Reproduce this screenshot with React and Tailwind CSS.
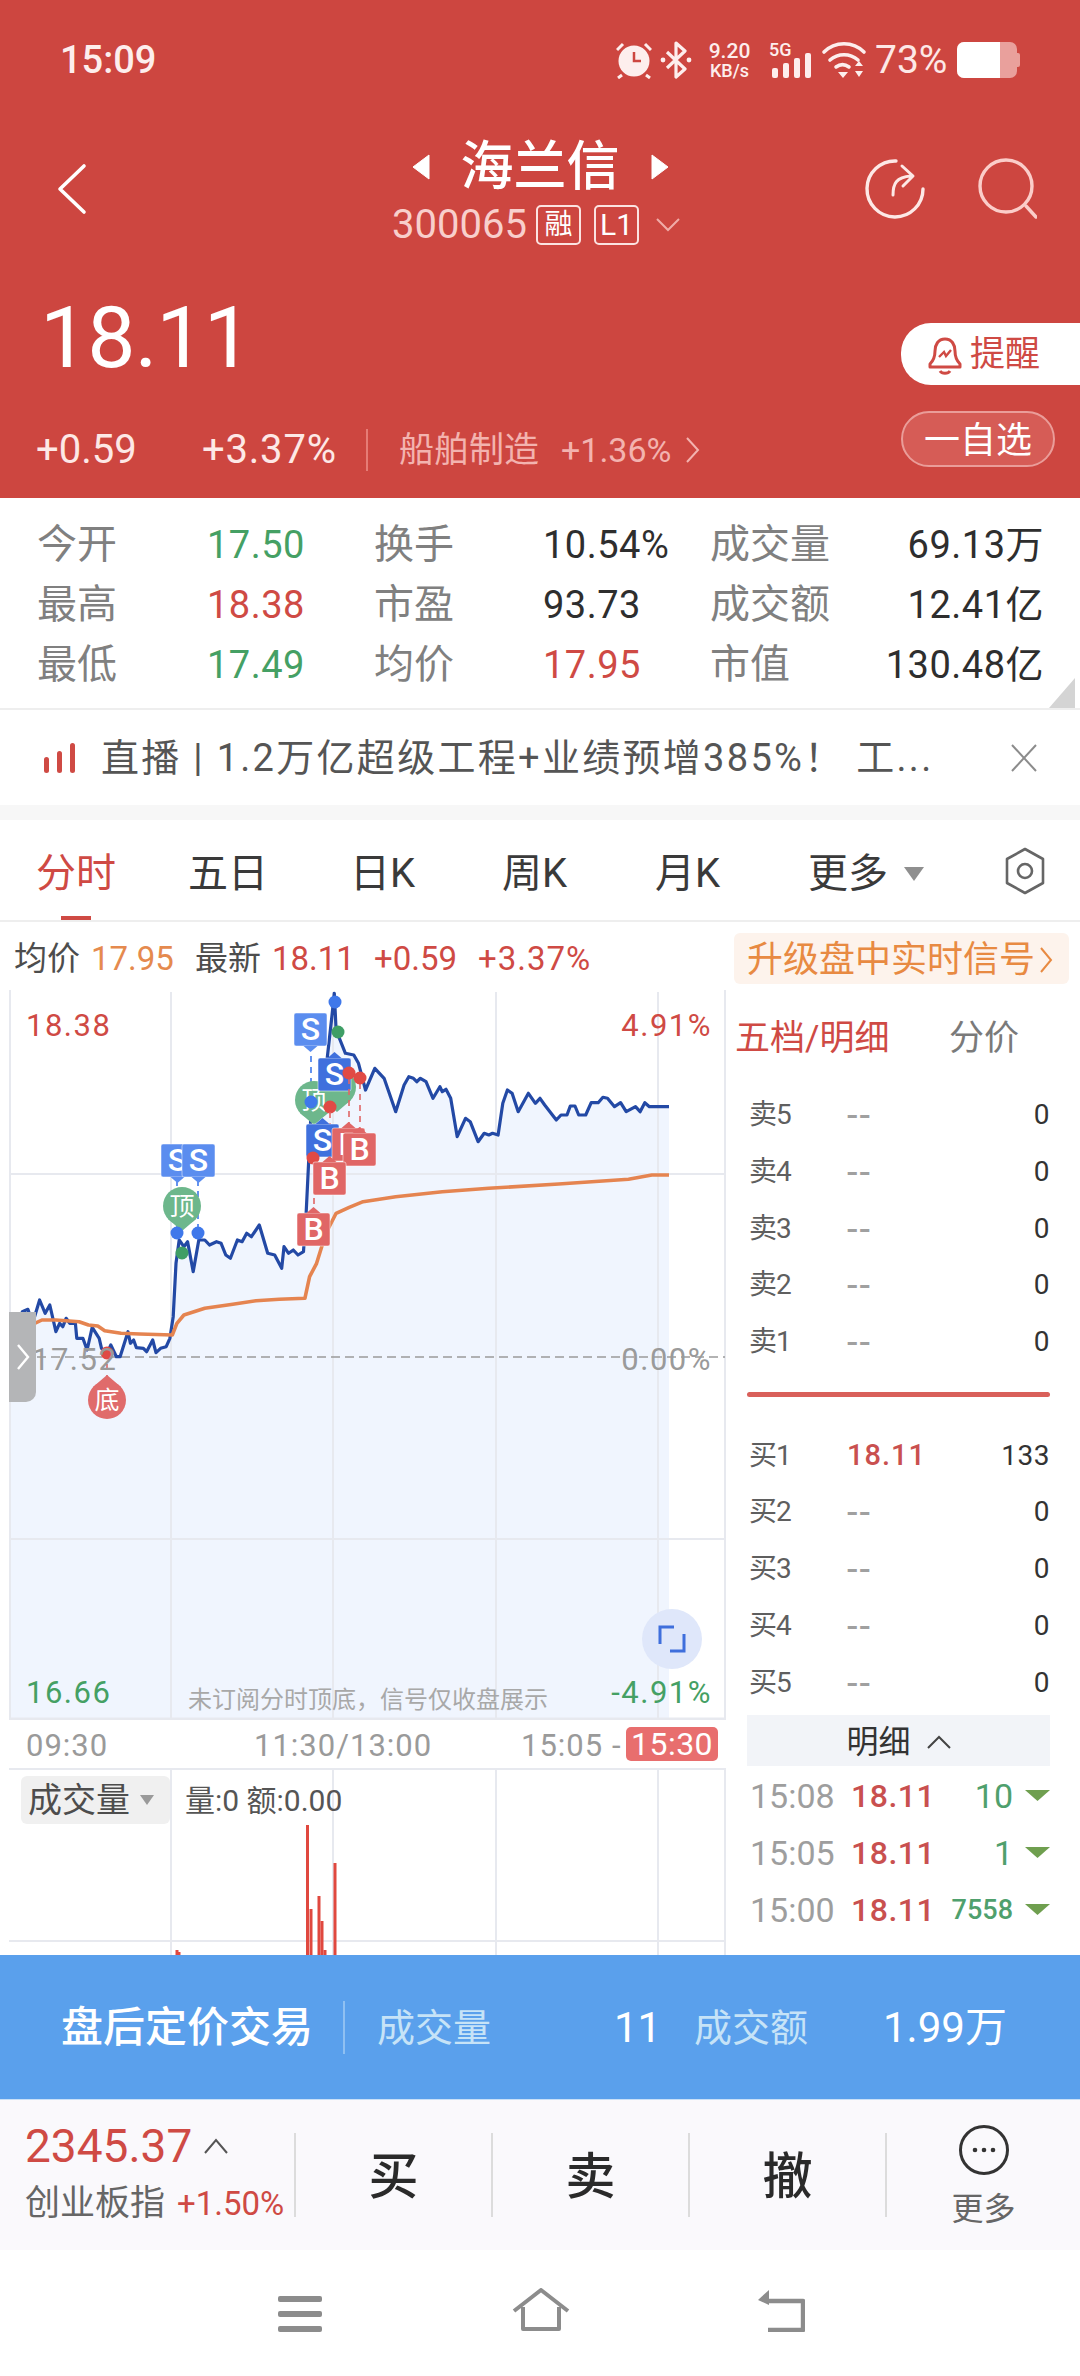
import React from "react";

const z3 = (p) => p.map(([x, y]) => [+(x / 2.148).toFixed(1), +(y / 3 + 970).toFixed(1)]);
const blue = z3([[20,1170],[28,1100],[35,1060],[42,1065],[48,1025],[60,1018],[70,1060],[85,990],[97,1030],[107,1005],[120,1085],[128,1060],[135,1070],[142,1045],[150,1060],[162,1060],[165,1105],[178,1105],[187,1140],[198,1072],[213,1105],[218,1135],[230,1150],[238,1125],[250,1160],[258,1160],[275,1085],[280,1120],[287,1110],[293,1133],[308,1135],[315,1145],[328,1110],[335,1148],[345,1135],[357,1130],[365,1105],[372,1040],[378,880],[385,810],[395,830],[403,815],[415,905],[427,810],[440,810],[450,825],[465,815],[475,820],[485,855],[495,865],[510,810],[520,815],[530,790],[540,800],[557,765],[575,850],[590,855],[605,895],[610,830],[620,850],[630,840],[640,855],[652,845],[658,720],[668,430],[680,400],[700,300],[712,150],[718,70],[722,180],[742,250],[760,255],[770,280],[785,360],[805,295],[825,325],[850,425],[868,345],[878,320],[888,325],[895,335],[903,325],[915,335],[930,385],[945,350],[950,365],[958,358],[968,385],[982,500],[1000,445],[1010,455],[1027,515],[1040,490],[1050,495],[1058,490],[1070,495],[1080,400],[1090,360],[1100,370],[1113,425],[1135,370],[1150,400],[1160,385],[1170,405],[1195,450],[1205,435],[1218,435],[1225,408],[1235,408],[1243,435],[1258,435],[1270,398],[1285,398],[1295,382],[1305,385],[1320,410],[1333,398],[1345,425],[1365,410],[1375,425],[1385,398],[1395,410],[1437,410]]);
const orange = z3([[20,1185],[30,1110],[60,1070],[90,1050],[120,1050],[170,1055],[190,1065],[210,1068],[225,1082],[260,1090],[300,1092],[370,1095],[380,1060],[395,1035],[440,1015],[500,1003],[550,992],[600,988],[655,985],[665,920],[680,880],[700,790],[722,730],[750,712],[780,695],[850,680],[950,665],[1050,655],[1200,642],[1350,628],[1400,615],[1437,615]]);
const pts = (a) => a.map((p) => p.join(",")).join(" ");

function Badge({ x, y, t, fill, up }) {
  const w = 33, h = 33, c = x + w / 2;
  const tip = up ? `${c - 7},${y} ${c},${y - 6} ${c + 7},${y}` : `${c - 7},${y + h} ${c},${y + h + 6} ${c + 7},${y + h}`;
  return (
    <g>
      <rect x={x} y={y} width={w} height={h} rx="2" fill={fill} stroke="#ffffff" strokeOpacity="0.5" />
      <polygon points={tip} fill={fill} />
      <text x={c} y={y + 27} textAnchor="middle" fontSize="32" fontWeight="500" fill="#fff">{t}</text>
    </g>
  );
}
function Drop({ cx, cy, t, fill, up }) {
  const tip = up ? `${cx - 14},${cy - 13} ${cx},${cy - 25} ${cx + 14},${cy - 13}` : `${cx - 14},${cy + 13} ${cx},${cy + 25} ${cx + 14},${cy + 13}`;
  return (
    <g>
      <circle cx={cx} cy={cy} r="19" fill={fill} />
      <polygon points={tip} fill={fill} />
      <text x={cx} y={cy + 9} textAnchor="middle" fontSize="25" fill="#fff">{t}</text>
    </g>
  );
}
const Dot = ({ x, y, c }) => <circle cx={x} cy={y} r="6.5" fill={c} />;
const Dash = ({ x, a, b, c }) => <line x1={x} x2={x} y1={a} y2={b} stroke={c} strokeWidth="1.6" strokeDasharray="6 5" />;

function Chart() {
  const S = "#5b8def", SD = "#3f70dd", B = "#e06666", G = "#6db78c", BD = "#3f78ea", RD = "#e04a45", GD = "#3f9e66";
  return (
    <svg className="absolute inset-0 font-['Roboto','Noto_Sans_CJK_SC',sans-serif]" width="717" height="730" viewBox="9 990 717 730">
      <polygon points={`9,1718 ${pts(blue)} 669,1718`} fill="#f0f5fe" />
      {[171, 333, 496, 658].map((x) => <line key={x} x1={x} x2={x} y1="992" y2="1720" stroke="#e7e9ef" strokeWidth="2" />)}
      {[1174, 1539].map((y) => <line key={y} x1="9" x2="725" y1={y} y2={y} stroke="#e7e9ef" strokeWidth="2" />)}
      <line x1="9" x2="725" y1="1719" y2="1719" stroke="#e7e9ef" strokeWidth="3" />
      <line x1="10" x2="10" y1="990" y2="1720" stroke="#e7e9ef" strokeWidth="2" />
      <line x1="725" x2="725" y1="990" y2="1720" stroke="#e7e9ef" strokeWidth="2" />
      <line x1="9" x2="725" y1="1357" y2="1357" stroke="#9a9a9a" strokeWidth="1.6" strokeDasharray="9 5" />
      <polyline points={pts(blue)} fill="none" stroke="#2349a5" strokeWidth="3.2" strokeLinejoin="round" />
      <polyline points={pts(orange)} fill="none" stroke="#e58450" strokeWidth="3.6" strokeLinejoin="round" />

      <Dash x={107} a={1353} b={1380} c="#e06666" />
      <Dot x={107} y={1353} c={RD} />
      <Drop cx={107} cy={1400} t="底" fill="#e06b6b" up />

      <Dash x={177} a={1180} b={1232} c={BD} />
      <Dash x={198} a={1180} b={1232} c={BD} />
      <Drop cx={182} cy={1206} t="顶" fill={G} />
      <Dot x={177} y={1233} c={BD} />
      <Dot x={198} y={1233} c={BD} />
      <Dot x={182} y={1253} c={GD} />
      <Badge x={161} y={1144} t="S" fill={S} />
      <Badge x={182} y={1144} t="S" fill={S} />

      <Dash x={311} a={1056} b={1100} c={BD} />
      <Badge x={294} y={1013} t="S" fill={S} />
      <Dot x={335} y={1002} c={BD} />
      <Dot x={338} y={1032} c={GD} />
      <Drop cx={337} cy={1087} t="" fill={G} />
      <Drop cx={314} cy={1100} t="顶" fill={G} />
      <Badge x={318} y={1058} t="S" fill={SD} up />
      <Dot x={311} y={1102} c={BD} />
      <Dot x={330} y={1107} c={RD} />
      <Dash x={330} a={1112} b={1130} c="#e06666" />
      <Dash x={349} a={1078} b={1128} c="#e06666" />
      <Dash x={360} a={1083} b={1133} c="#e06666" />
      <Dot x={349} y={1073} c={RD} />
      <Dot x={360} y={1078} c={RD} />
      <Badge x={306} y={1124} t="S" fill={SD} up />
      <Dot x={313} y={1158} c={RD} />
      <Dash x={314} a={1198} b={1212} c="#e06666" />
      <Badge x={332} y={1128} t="B" fill={B} up />
      <Badge x={343} y={1133} t="B" fill={B} up />
      <Badge x={313} y={1162} t="B" fill={B} up />
      <Badge x={297} y={1213} t="B" fill={B} up />
    </svg>
  );
}

function VolumeChart() {
  const bars = [[177, 1950], [179, 1952], [307.5, 1825], [311, 1909], [319, 1896], [322, 1921], [325, 1950], [335, 1863]];
  return (
    <svg className="absolute inset-0" width="726" height="187" viewBox="0 1768 726 187">
      <line x1="9" x2="725" y1="1769" y2="1769" stroke="#e7e9ef" strokeWidth="2" />
      <line x1="9" x2="725" y1="1941" y2="1941" stroke="#e7e9ef" strokeWidth="2" />
      {[171, 333, 496, 658, 725].map((x) => <line key={x} x1={x} x2={x} y1="1768" y2="1955" stroke="#e7e9ef" strokeWidth="2" />)}
      {bars.map(([x, y]) => <rect key={x} x={x - 1.5} y={y} width="3" height={1955 - y} fill="#e0483f" />)}
    </svg>
  );
}

function StatusIcons() {
  return (
    <div className="flex items-center">
      <svg width="36" height="38" viewBox="614 41 36 38" className="mr-[8px]">
        <circle cx="632" cy="61" r="15.5" fill="#fdeeed" />
        <path d="M632 52v9h7" fill="none" stroke="#cd4640" strokeWidth="2.5" />
        <path d="M615 50l6-6M649 50l-6-6M620 75l-4 3M644 75l4 3" stroke="#fdeeed" strokeWidth="3" />
      </svg>
      <svg width="32" height="38" viewBox="659 41 32 38" className="mr-[15px]">
        <path d="M666 52l18 17-9 8V43l9 8-18 17" fill="none" stroke="#fdeeed" strokeWidth="3.2" strokeLinejoin="round" />
        <circle cx="662" cy="60" r="2.4" fill="#fdeeed" /><circle cx="688" cy="60" r="2.4" fill="#fdeeed" />
      </svg>
      <div className="w-[45px] flex flex-col items-center text-[#fdeeed] font-medium mr-[17px]">
        <span className="text-[21px] leading-[21px]">9.20</span>
        <span className="text-[18px] leading-[18px]">KB/s</span>
      </div>
      <div className="w-[44px] h-[38px] mr-[8px] relative">
        <span className="absolute left-[0px] top-[0px] text-[18px] leading-[18px] font-medium text-[#fdeeed]">5G</span>
        <svg width="44" height="38" viewBox="767 41 44 38">
          <rect x="770" y="68" width="6" height="10" rx="2" fill="#fdeeed" />
          <rect x="781" y="63" width="6" height="15" rx="2" fill="#fdeeed" />
          <rect x="792" y="58" width="6" height="20" rx="2" fill="#fdeeed" />
          <rect x="803" y="53" width="6" height="25" rx="2" fill="#fdeeed" />
        </svg>
      </div>
      <svg width="46" height="38" viewBox="820 41 46 38" className="mr-[8px]">
        <path d="M823 52c11-11 29-11 40 0M829 60c8-7 20-7 28 0M835 67c4-3 9-3 13 0" fill="none" stroke="#fdeeed" strokeWidth="3.6" strokeLinecap="round" />
        <path d="M837 72h10l-5 6zM854 66l4-5 4 5zM854 71h8l-4 6z" fill="#fdeeed" />
      </svg>
      <span className="w-[78px] text-[39px] leading-none text-[#fde8e6] mr-[4px]">73%</span>
      <div className="flex items-center">
        <div className="w-[60px] h-[36px] rounded-[7px] bg-[#e9a09c] overflow-hidden">
          <div className="w-[43px] h-full bg-white" />
        </div>
        <div className="w-[3px] h-[14px] bg-[#e9a09c] rounded-r-[2px]" />
      </div>
    </div>
  );
}

function Stat({ label, value, color, right }) {
  return (
    <>
      <span className="text-[40px] text-[#808080]">{label}</span>
      <span className={`tracking-[0.5px] ${right ? "text-right" : ""} ${color || ""}`}>{value}</span>
    </>
  );
}

function Level({ label, price, qty }) {
  return (
    <div className="h-[56.7px] pl-[2px] grid grid-cols-[98px_1fr_auto] items-center text-[28px]">
      <span className="text-[#5f5f5f] tracking-[-1px]">{label}</span>
      {price ? <span className="text-[#c9504f] text-[29px] font-medium tracking-[1px]">{price}</span> : <span className="text-[#a0a0a0] text-[38px] leading-[28px] tracking-[2px]">--</span>}
      <span className="text-[#333333] tracking-[0.5px]">{qty}</span>
    </div>
  );
}

function Trade({ t, q, small }) {
  return (
    <div className="h-[57px] flex items-center text-[34px]">
      <span className="w-[104px] pl-[3px] text-[#9e9e9e]">{t}</span>
      <span className="w-[100px] text-[#c9504f] font-medium text-[32px] tracking-[0.5px]">18.11</span>
      <span className={small ? "w-[62px] text-right text-[#4fa06d] text-[27px] font-medium" : "w-[62px] text-right text-[#4fa06d]"}>{q}</span>
      <svg width="25" height="12" viewBox="0 0 25 12" className="ml-[12px]"><path d="M0 0h25L12.5 11z" fill="#6f9f4f" /></svg>
    </div>
  );
}

export default function App() {
  const axis = "absolute text-[31px] leading-[30px] tracking-[1.5px]";
  return (
    <div className="relative w-[1080px] h-[2376px] overflow-hidden bg-white flex flex-col font-['Roboto','Noto_Sans_CJK_SC',sans-serif]">
      {/* header */}
      <header className="h-[498px] shrink-0 bg-[#cd4640] text-white flex flex-col">
        <div className="h-[118px] pt-[2px] flex items-center justify-between pl-[60px] pr-[60px]">
          <span className="text-[38px] leading-none text-[#fdeeed] font-medium">15:09</span>
          <StatusIcons />
        </div>
        <div className="h-[134px] flex">
          <div className="w-[300px] pl-[56px] pt-[45px]">
            <svg width="32" height="52" viewBox="0 0 32 52"><path d="M28 3L4 26l24 23" fill="none" stroke="#fff" strokeWidth="3.6" strokeLinecap="round" strokeLinejoin="round" /></svg>
          </div>
          <div className="w-[480px] flex flex-col items-center pt-[23px]">
            <div className="h-[52px] flex items-center gap-[30px]">
              <svg width="20" height="26" viewBox="0 0 20 26"><path d="M18 1L2 13l16 12z" fill="#fff" stroke="#fff" strokeLinejoin="round" /></svg>
              <span className="text-[53px] leading-none font-medium">海兰信</span>
              <svg width="20" height="26" viewBox="0 0 20 26"><path d="M2 1l16 12L2 25z" fill="#fff" stroke="#fff" strokeLinejoin="round" /></svg>
            </div>
            <div className="mt-[12px] h-[40px] flex items-center text-[#f8cfcc] -ml-[8px]">
              <span className="text-[40px] leading-none w-[144px]">300065</span>
              <span className="w-[45px] h-[40px] mr-[13px] rounded-[5px] border-2 border-[#fbe3e1] text-[28px] leading-[36px] text-center text-white">融</span>
              <span className="w-[45px] h-[40px] mr-[17px] rounded-[5px] border-2 border-[#fbe3e1] text-[30px] leading-[36px] text-center text-white">L1</span>
              <svg width="24" height="14" viewBox="0 0 24 14"><path d="M1 1l11 11L23 1" fill="none" stroke="#f0aca8" strokeWidth="2" /></svg>
            </div>
          </div>
          <div className="w-[300px] flex justify-end gap-[52px] pr-[43px] pt-[39px]">
            <svg width="62" height="62" viewBox="862 157 62 62">
              <path d="M895 161a28 28 0 1 0 27 28" fill="none" stroke="#fde8e6" strokeWidth="3.4" strokeLinecap="round" />
              <path d="M892 195c0-11 3-18 18-19M901 166l11 10-10 10" fill="none" stroke="#fde8e6" strokeWidth="3" strokeLinecap="round" strokeLinejoin="round" />
            </svg>
            <svg width="60" height="62" viewBox="976 157 60 62">
              <circle cx="1005" cy="186" r="26" fill="none" stroke="#fbcdc9" strokeWidth="3.4" />
              <path d="M1025 206l10 11" stroke="#fbcdc9" strokeWidth="3.4" strokeLinecap="round" />
            </svg>
          </div>
        </div>
        <div className="flex-1 flex justify-between">
          <div className="pl-[37px]">
            <div className="mt-[42px] h-[88px] pl-[3px] text-[86px] leading-[88px] tracking-[-1px]">18.11</div>
            <div className="mt-[47px] h-[42px] flex items-center leading-none -ml-[1px] text-[#fde8e6]">
              <span className="w-[166px] text-[40px]">+0.59</span>
              <span className="w-[164px] text-[40px] tracking-[0.8px]">+3.37%</span>
              <span className="w-[2px] h-[42px] bg-[#e67c76] mr-[31px]" />
              <span className="w-[162px] text-[35px] text-[#f3b3af]">船舶制造</span>
              <span className="w-[124px] text-[34px] text-[#f3b3af]">+1.36%</span>
              <svg width="15" height="28" viewBox="0 0 15 28"><path d="M2 2l11 12L2 26" fill="none" stroke="#f3b3af" strokeWidth="2" /></svg>
            </div>
          </div>
          <div className="w-[179px] flex flex-col">
            <div className="mt-[71px] h-[62px] pt-[3px] bg-white rounded-l-[30px] flex items-center pl-[26px] text-[#cf4a44] text-[35px]">
              <svg width="36" height="40" viewBox="0 0 36 40" className="mr-[7px]">
                <path d="M18 3c-7 0-10 6-10 12 0 6-2 10-5 13v3h30v-3c-3-3-5-7-5-13 0-6-3-12-10-12zM13 35c2 3 8 3 10 0" fill="none" stroke="#cf4a44" strokeWidth="3" strokeLinejoin="round" />
                <path d="M12 21l5-5 2 4 5-6" fill="none" stroke="#cf4a44" strokeWidth="2.4" />
              </svg>
              提醒
            </div>
            <div className="mt-[26px] h-[56px] pt-[3px] w-[154px] rounded-[28px] border-2 border-[#ea9d99] bg-[#d65c56] flex items-center justify-center text-[36px]">一自选</div>
          </div>
        </div>
      </header>

      {/* stats */}
      <section className="h-[210px] shrink-0 pt-[17px] pl-[37px] pr-[36px] relative">
        <div className="grid grid-cols-[170px_167px_169px_167px_1fr_auto] auto-rows-[60px] items-center text-[38px] leading-none text-[#2e2e2e]">
          <Stat label="今开" value="17.50" color="text-[#45a064]" />
          <Stat label="换手" value="10.54%" />
          <Stat label="成交量" value="69.13万" right />
          <Stat label="最高" value="18.38" color="text-[#cf4a44]" />
          <Stat label="市盈" value="93.73" />
          <Stat label="成交额" value="12.41亿" right />
          <Stat label="最低" value="17.49" color="text-[#45a064]" />
          <Stat label="均价" value="17.95" color="text-[#cf4a44]" />
          <Stat label="市值" value="130.48亿" right />
        </div>
        <svg width="26" height="30" viewBox="0 0 26 30" className="absolute right-[5px] bottom-0"><path d="M26 0v30H0z" fill="#d4d4d4" /></svg>
      </section>

      {/* banner */}
      <section className="h-[97px] shrink-0 border-t-[2px] border-[#eeeeee] flex items-center pl-[44px] pr-[42px]">
        <svg width="31" height="30" viewBox="0 0 31 30" className="mr-[26px]">
          <rect x="0" y="14" width="5" height="16" rx="2.5" fill="#cf4a44" />
          <rect x="13" y="8" width="5" height="22" rx="2.5" fill="#cf4a44" />
          <rect x="26" y="0" width="5" height="30" rx="2.5" fill="#cf4a44" />
        </svg>
        <span className="w-[840px] whitespace-nowrap text-[38px] tracking-[2.3px] leading-none text-[#555555]">直播 | 1.2万亿超级工程+业绩预增385%！ 工...</span>
        <svg width="28" height="28" viewBox="0 0 28 28" className="ml-auto"><path d="M2 1l24 26M26 1L2 27" stroke="#8c8c8c" strokeWidth="2" /></svg>
      </section>
      <div className="h-[15px] shrink-0 bg-[#f7f7f7]" />

      {/* tabs */}
      <nav className="h-[102px] shrink-0 border-b-[2px] border-[#eeeeee] flex items-center text-[40px] leading-none text-[#3a3a3a] relative pt-[7px]">
        <span className="ml-[36px] w-[80px] text-[#cf4a44]">分时</span>
        <span className="ml-[72px] w-[80px]">五日</span>
        <span className="ml-[82px] w-[70px]">日K</span>
        <span className="ml-[82px] w-[70px]">周K</span>
        <span className="ml-[83px] w-[70px]">月K</span>
        <span className="ml-[83px] w-[82px]">更多</span>
        <svg width="22" height="16" viewBox="0 0 22 16" className="ml-[13px]"><path d="M1 1h20L11 15z" fill="#8f8f8f" /></svg>
        <svg width="44" height="48" viewBox="0 0 44 48" className="ml-[78px] -mt-[5px]">
          <path d="M22 2l18 10v24L22 46 4 36V12z" fill="none" stroke="#666666" strokeWidth="2.6" strokeLinejoin="round" />
          <circle cx="22" cy="24" r="7" fill="none" stroke="#666666" strokeWidth="2.6" />
        </svg>
        <div className="absolute left-[61px] bottom-0 w-[30px] h-[4px] bg-[#cf4a44]" />
      </nav>

      {/* info line */}
      <div className="h-[68px] shrink-0 flex items-center pt-[4px] pl-[14px] text-[33px] leading-none whitespace-nowrap">
        <span className="w-[77px] text-[#4d4d4d]">均价</span>
        <span className="w-[104px] text-[#e58a4e]">17.95</span>
        <span className="w-[77px] text-[#4d4d4d]">最新</span>
        <span className="w-[102px] text-[#cf4a44]">18.11</span>
        <span className="w-[104px] text-[#cf4a44]">+0.59</span>
        <span className="w-[256px] text-[#cf4a44] tracking-[1px]">+3.37%</span>
        <div className="w-[335px] h-[51px] pt-[3px] rounded-[6px] bg-[#fdf3ec] text-[#e88a42] text-[36px] flex items-center pl-[13px]">
          升级盘中实时信号
          <svg width="14" height="28" viewBox="0 0 14 28" className="ml-[4px]"><path d="M2 2l10 12L2 26" fill="none" stroke="#e88a42" strokeWidth="2" /></svg>
        </div>
      </div>

      {/* main */}
      <main className="h-[965px] shrink-0 flex overflow-hidden">
        <div className="w-[726px] shrink-0 flex flex-col">
          <div className="relative h-[730px] w-[717px] ml-[9px] shrink-0">
            <Chart />
            <span className={`${axis} left-[17px] top-[21px] text-[#cf4a44]`}>18.38</span>
            <span className={`${axis} right-[14px] top-[21px] text-[#cf4a44]`}>4.91%</span>
            <span className={`${axis} left-[23px] top-[355px] text-[#9a9a9a]`}>17.52</span>
            <span className={`${axis} right-[14px] top-[355px] text-[#9a9a9a]`}>0.00%</span>
            <span className={`${axis} left-[17px] top-[688px] text-[#45a064]`}>16.66</span>
            <span className={`${axis} right-[14px] top-[688px] text-[#45a064]`}>-4.91%</span>
            <span className="absolute left-[179px] top-[698px] text-[24px] leading-[24px] text-[#a8a8a8] whitespace-nowrap">未订阅分时顶底，信号仅收盘展示</span>
            <div className="absolute left-0 top-[322px] w-[27px] h-[90px] bg-[#b4b5b7] rounded-br-[10px] flex items-center justify-center">
              <svg width="14" height="28" viewBox="0 0 14 28"><path d="M2 2l10 12L2 26" fill="none" stroke="#ffffff" strokeWidth="2.4" /></svg>
            </div>
            <div className="absolute left-[633px] top-[619px] w-[60px] h-[60px] rounded-full bg-[#dfe7fa] flex items-center justify-center">
              <svg width="30" height="30" viewBox="0 0 30 30"><path d="M17 3H3v17M13 27h14V10" fill="none" stroke="#3f6fdc" strokeWidth="3" /></svg>
            </div>
          </div>
          <div className="h-[48px] shrink-0 flex items-center text-[31px] leading-none tracking-[1px] text-[#9a9a9a] pl-[26px]">
            <span className="w-[228px] pt-[3px]">09:30</span>
            <span className="w-[267px] pt-[3px]">11:30/13:00</span>
            <span className="w-[105px] pt-[3px] whitespace-nowrap">15:05 -</span>
            <span className="w-[92px] h-[34px] rounded-[5px] bg-[#e86e6e] text-white text-center leading-[35px] text-[32px] tracking-[0.5px]">15:30</span>
          </div>
          <div className="relative flex-1">
            <VolumeChart />
            <div className="relative flex items-center pt-[8px] pl-[21px]">
              <div className="w-[149px] h-[48px] rounded-[6px] bg-[#f0f0f0] flex items-center pl-[7px] text-[34px] leading-none text-[#4d4d4d]">
                成交量
                <svg width="16" height="12" viewBox="0 0 16 12" className="ml-[9px]"><path d="M1 1h14L8 11z" fill="#9a9a9a" /></svg>
              </div>
              <span className="ml-[15px] pt-[2px] text-[30px] leading-none text-[#555555] whitespace-nowrap">量:0 额:0.00</span>
            </div>
          </div>
        </div>
        <div className="w-[354px] shrink-0 flex flex-col">
          <div className="h-[2px] w-[344px] bg-[#eeeeee]" />
          <div className="h-[97px] shrink-0 flex items-center pl-[9px] text-[35px] leading-none">
            <span className="w-[214px] text-[#cf4a44] whitespace-nowrap">五档/明细</span>
            <span className="text-[#7a7a7a]">分价</span>
          </div>
          <div className="ml-[21px] w-[303px] flex flex-col">
            {[5, 4, 3, 2, 1].map((n) => <Level key={n} label={`卖${n}`} qty="0" />)}
            <div className="mt-[22px] h-[5px] rounded-full bg-[#d9605a]" />
            <div className="h-[30px]" />
            <Level label="买1" price="18.11" qty="133" />
            {[2, 3, 4, 5].map((n) => <Level key={n} label={`买${n}`} qty="0" />)}
            <div className="mt-[4px] h-[51px] pt-[3px] bg-[#f2f4f8] flex items-center justify-center text-[32px] leading-none text-[#333333]">
              明细
              <svg width="24" height="14" viewBox="0 0 24 14" className="ml-[16px]"><path d="M1 13L12 2l11 11" fill="none" stroke="#444444" strokeWidth="2" /></svg>
            </div>
            <div className="h-[2px]" />
            <Trade t="15:08" q="10" />
            <Trade t="15:05" q="1" />
            <Trade t="15:00" q="7558" small />
            <Trade t="14:57" q="194" />
          </div>
        </div>
      </main>

      {/* after-hours */}
      <section className="h-[144px] shrink-0 bg-[#5aa0ec] flex items-center pl-[61px] pt-[1px] text-[38px] leading-none whitespace-nowrap">
        <span className="w-[282px] text-white text-[42px] font-medium">盘后定价交易</span>
        <span className="w-[2px] h-[53px] bg-[#8fc0f2]" />
        <span className="ml-[32px] w-[237px] text-[#c6e3f7]">成交量</span>
        <span className="w-[80px] text-white text-[42px]">11</span>
        <span className="w-[189px] text-[#c6e3f7]">成交额</span>
        <span className="text-white text-[42px]">1.99万</span>
      </section>

      {/* trade bar */}
      <section className="h-[151px] shrink-0 bg-[#faf9fc] border-t-[1px] border-[#c9e0f7] flex items-center">
        <div className="w-[294px] h-full pl-[25px] pt-[26px]">
          <div className="flex items-center h-[40px]">
            <span className="text-[46px] leading-none text-[#cf4a44]">2345.37</span>
            <svg width="24" height="16" viewBox="0 0 24 16" className="ml-[12px]"><path d="M1 15L12 2l11 13" fill="none" stroke="#555555" strokeWidth="2" /></svg>
          </div>
          <div className="mt-[17px] flex items-center h-[40px] leading-none whitespace-nowrap">
            <span className="w-[152px] text-[35px] text-[#666666]">创业板指</span>
            <span className="text-[33px] text-[#cf4a44]">+1.50%</span>
          </div>
        </div>
        {["买", "卖", "撤"].map((t) => (
          <div key={t} className="w-[197px] h-[84px] pt-[4px] border-l-[2px] border-[#dcdcdc] flex items-center justify-center text-[50px] leading-none font-medium text-[#2a2a2a]">{t}</div>
        ))}
        <div className="flex-1 h-[84px] border-l-[2px] border-[#dcdcdc] flex flex-col items-center relative">
          <svg width="50" height="50" viewBox="0 0 50 50" className="absolute top-[-8px]">
            <circle cx="25" cy="25" r="23.5" fill="none" stroke="#333333" strokeWidth="3" />
            <circle cx="16" cy="25" r="2.3" fill="#333333" /><circle cx="25" cy="25" r="2.3" fill="#333333" /><circle cx="34" cy="25" r="2.3" fill="#333333" />
          </svg>
          <span className="absolute top-[60px] text-[32px] leading-[32px] text-[#666666]">更多</span>
        </div>
      </section>

      {/* nav bar */}
      <section className="flex-1 flex items-start">
        <svg className="mt-[46px] ml-[278px]" width="44" height="36" viewBox="0 0 44 36">
          <rect x="0" y="0" width="44" height="6" rx="2" fill="#8c8c8c" /><rect x="0" y="15" width="44" height="6" rx="2" fill="#8c8c8c" /><rect x="0" y="30" width="44" height="6" rx="2" fill="#8c8c8c" />
        </svg>
        <svg className="mt-[38px] ml-[190px]" width="58" height="44" viewBox="0 0 58 44">
          <path d="M2 23L29 2l27 21M11 19v22h36V19" fill="none" stroke="#8c8c8c" strokeWidth="4" strokeLinejoin="round" />
        </svg>
        <svg className="mt-[39px] ml-[187px]" width="48" height="43" viewBox="0 0 48 43">
          <path d="M11 12h35v29H11" fill="none" stroke="#8c8c8c" strokeWidth="4.4" strokeLinejoin="round" />
          <path d="M12 1L1 11l11 5z" fill="#8c8c8c" />
        </svg>
      </section>
    </div>
  );
}
